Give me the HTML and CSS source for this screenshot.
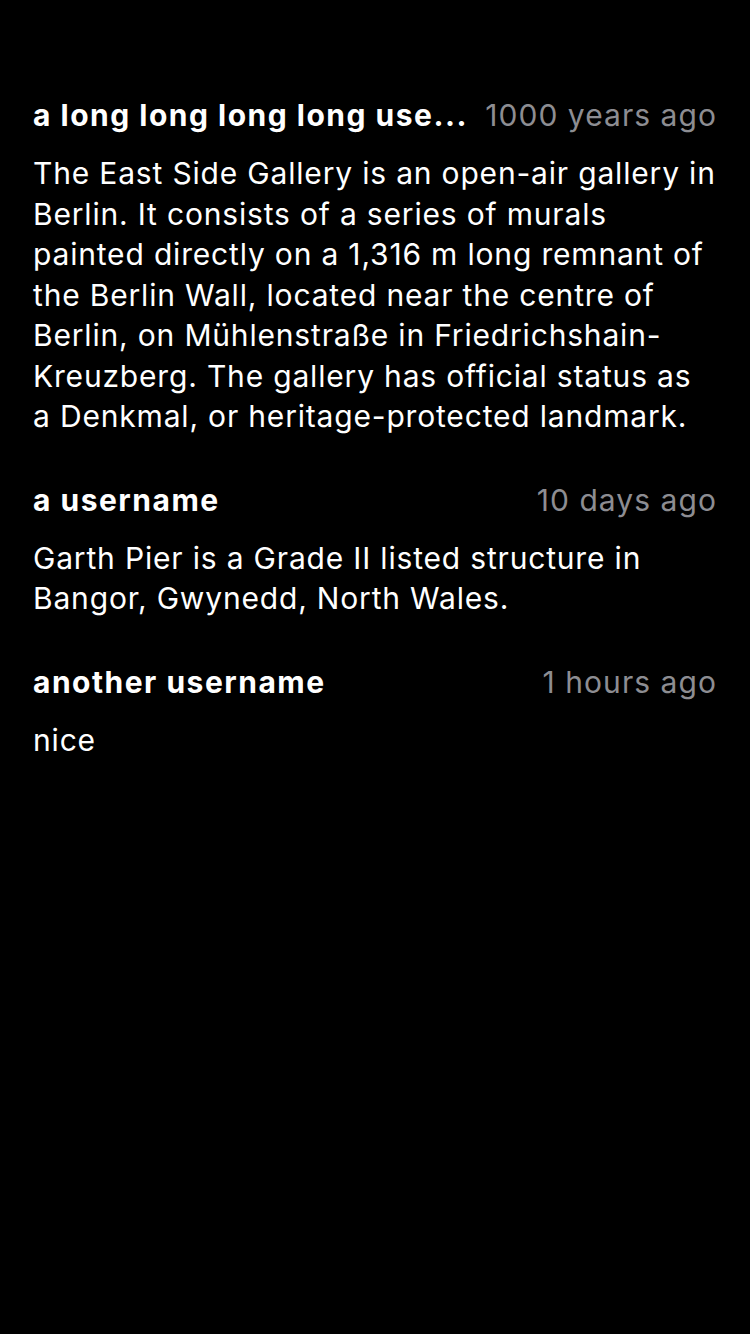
FILE: index.html
```html
<!DOCTYPE html>
<html lang="en">
<head>
<meta charset="utf-8">
<title>Comments</title>
<link rel="stylesheet" href="styles.css">
</head>
<body>
<main class="comments">
  <article class="comment">
    <header class="comment-head">
      <span class="comment-user">a long long long long use...</span>
      <span class="comment-time">1000 years ago</span>
    </header>
    <p class="comment-body">The East Side Gallery is an open-air gallery in Berlin. It consists of a series of murals painted directly on a 1,316 m long remnant of the Berlin Wall, located near the centre of Berlin, on Mühlenstraße in Friedrichshain-Kreuzberg. The gallery has official status as a Denkmal, or heritage-protected landmark.</p>
  </article>
  <article class="comment">
    <header class="comment-head">
      <span class="comment-user">a username</span>
      <span class="comment-time">10 days ago</span>
    </header>
    <p class="comment-body">Garth Pier is a Grade II listed structure in Bangor, Gwynedd, North Wales.</p>
  </article>
  <article class="comment">
    <header class="comment-head">
      <span class="comment-user">another username</span>
      <span class="comment-time">1 hours ago</span>
    </header>
    <p class="comment-body">nice</p>
  </article>
</main>
</body>
</html>
```
FILE: styles.css
```css
html, body {
  margin: 0;
  padding: 0;
  background: #000;
}
body {
  width: 750px;
  min-height: 1334px;
  font-family: Inter, "Noto Sans", "Liberation Sans", sans-serif;
  color: #fff;
}
.comments {
  padding: 95px 33px 0 33px;
  display: flex;
  flex-direction: column;
  gap: 43px;
}
.comment {
  display: flex;
  flex-direction: column;
  gap: 18px;
}
.comment-head {
  display: flex;
  align-items: center;
  justify-content: space-between;
  gap: 16px;
  height: 40px;
}
.comment-user {
  font-size: 30px;
  font-weight: 700;
  line-height: 40px;
  white-space: nowrap;
  letter-spacing: 1.5px;
}
.comment-time {
  flex: 0 0 auto;
  font-size: 30px;
  line-height: 40px;
  color: #8d8d92;
  letter-spacing: 1.05px;
  white-space: nowrap;
}
.comment-body {
  margin: 0;
  font-size: 30px;
  line-height: 40.5px;
  letter-spacing: 0.82px;
}
```
